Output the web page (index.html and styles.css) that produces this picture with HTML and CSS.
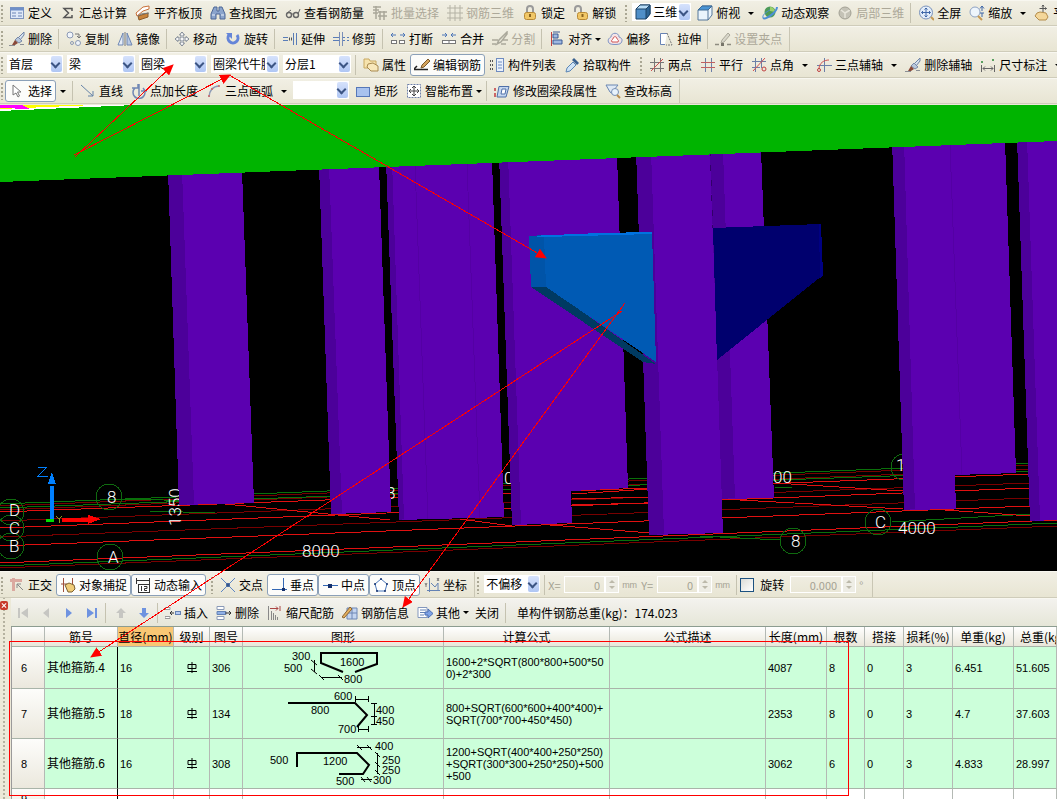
FILE: index.html
```html
<!DOCTYPE html>
<html lang="zh-CN">
<head>
    <meta charset="UTF-8">
    <meta name="viewport" content="width=device-width, initial-scale=1.0">
    <title>钢筋算量</title>
    <link rel="stylesheet" href="styles.css">
</head>
<body>
    <!-- icons used more than once -->
    <svg class="sprite" aria-hidden="true">
        <symbol id="brush" viewBox="0 0 16 16">
            <path d="M15 1L9 7l2 2 4-5z" fill="#d8e2ee" stroke="#6f84a8"/>
            <path d="M9 6l4 4-3 2-4-3z" fill="#b9c8dc" stroke="#7a8aa8"/>
            <path d="M6 9l3 3-3 2-3 0z" fill="#8a4a3a"/>
            <path d="M0 14.500h6M11 13.500h4" stroke="#8b8f95"/>
        </symbol>
        <symbol id="cube" viewBox="0 0 16 16">
            <path d="M1 5l4-4h10v9l-4 5H1z" fill="#4f8fc8" stroke="#1d4468"/>
            <path d="M1 5l4-4h10l-4 4z" fill="#b7dcf6" stroke="#1d4468"/>
            <path d="M11 5l4-4v9l-4 5z" fill="#2d6494" stroke="#1d4468"/>
        </symbol>
        <symbol id="rebar3d" viewBox="0 0 16 16">
            <path d="M3 0v16M8 0v16M13 0v16M0 3h16M0 8h16M0 13h16" stroke="#b4b2a5" fill="none"/>
        </symbol>
        <symbol id="grade" viewBox="0 0 10 11">
            <path d="M1 2.500h8v4H1zM5 0v11M0 9.500h10" fill="none" stroke="#000"/>
        </symbol>
    </svg>

    <header>
        <div class="row">
            <div class="toolbar">
                <span class="grip"></span>
                <button class="btn"><svg class="icon" viewBox="0 0 16 16"><rect x="1.500" y="2.500" width="13" height="11" fill="#dfe9f8" stroke="#7f95bd"/><path d="M1 4h14" stroke="#6f8fc8" stroke-width="3"/><path d="M3 8h4M3 11h4M9 8h4M9 11h4" stroke="#6d85b5"/></svg>定义</button>
                <button class="btn"><svg class="icon" viewBox="0 0 16 16"><path d="M12 6V3.500H4L8.500 8 4 12.500h8V10" fill="none" stroke="#555" stroke-width="1.500"/></svg>汇总计算</button>
                <button class="btn"><svg class="icon" viewBox="0 0 16 16"><path d="M1 8l7-6 6-1v3L8 6l-6 5z" fill="#fff" stroke="#c9703a"/><path d="M3 11l10-3v4l-9 3z" fill="#c8843c" stroke="#8a5a2a"/><path d="M3 11l3-2 8-1" stroke="#777" fill="none"/></svg>平齐板顶</button>
                <button class="btn"><svg class="icon" viewBox="0 0 16 16"><path d="M4 2h3v4h2V2h3l3 7v5h-5V9H6v5H1V9z" fill="#8ba4cc" stroke="#4d6796"/><path d="M2 10h3M11 10h3" stroke="#e6eefb"/></svg>查找图元</button>
                <button class="btn"><svg class="icon" viewBox="0 0 16 16"><circle cx="4" cy="10" r="2.500" fill="none" stroke="#666" stroke-width="1.400"/><circle cx="11" cy="10" r="2.500" fill="none" stroke="#666" stroke-width="1.400"/><path d="M6 9h3M2 8l4-3M13 9l2-5" stroke="#666" fill="none"/></svg>查看钢筋量</button>
                <button class="btn" disabled><svg class="icon" viewBox="0 0 16 16"><path d="M1 2h8M1 5h6M1 8h5M4 1v13M8 6v9M12 6v9M6 7h9M6 11h9" stroke="#a9a799" stroke-width="1.500" fill="none"/></svg>批量选择</button>
                <button class="btn" disabled><svg class="icon"><use href="#rebar3d"/></svg>钢筋三维</button>
                <button class="btn"><svg class="icon" viewBox="0 0 16 16"><path d="M5 8V4a3 3 0 0 1 6 0v4" fill="none" stroke="#9a9a9a" stroke-width="2"/><rect x="2.500" y="7.500" width="11" height="7" rx="2" fill="#f1c766" stroke="#b98a35"/><path d="M8 9v3" stroke="#8a6420" stroke-width="2"/></svg>锁定</button>
                <button class="btn"><svg class="icon" viewBox="0 0 16 16"><path d="M2 7V4a3 3 0 0 1 6 0v4" fill="none" stroke="#9a9a9a" stroke-width="2"/><rect x="4.500" y="7.500" width="10" height="7" rx="2" fill="#f1c766" stroke="#b98a35"/><path d="M9.500 9v3" stroke="#8a6420" stroke-width="2"/></svg>解锁</button>
            </div>
            <div class="toolbar">
                <span class="grip"></span>
                <label class="combo view"><svg class="icon"><use href="#cube"/></svg><select aria-label="视图"><option>三维</option></select></label>
                <button class="btn"><svg class="icon" viewBox="0 0 16 16"><path d="M1 5l4-4h10v9l-4 5H1z" fill="#eaf4fc" stroke="#54779a"/><path d="M1 5l4-4h10l-4 4z" fill="#4a94d4" stroke="#3d6a94"/><path d="M11 5v10" stroke="#54779a"/></svg>俯视</button><button class="drop" aria-label="俯视选项"></button>
                <button class="btn"><svg class="icon" viewBox="0 0 16 16"><circle cx="8" cy="7" r="5.500" fill="#4d9b58"/><path d="M8 2a5 5 0 0 1 5 5l-5-1z" fill="#9bd06b"/><path d="M1 13C4 15 15 7 15 2" fill="none" stroke="#4d8fd6" stroke-width="2"/><path d="M1 13c-1-3 3-6 7-8" fill="none" stroke="#4d8fd6"/></svg>动态观察</button>
                <button class="btn" disabled><svg class="icon" viewBox="0 0 16 16"><circle cx="8" cy="8" r="6" fill="#c4c2b6"/><path d="M4 5l4 3 5-3M8 8v5" stroke="#e8e6dc" fill="none" stroke-width="1.500"/><circle cx="8" cy="8" r="6" fill="none" stroke="#a3a195"/></svg>局部三维</button>
                <span class="sep"></span>
                <button class="btn"><svg class="icon" viewBox="0 0 16 16"><circle cx="8" cy="7.500" r="6.500" fill="#e3edf9" stroke="#7b93bc"/><path d="M8 3v9M3.500 7.500h9M6.500 4.500L8 3l1.500 1.500M6.500 10.500L8 12l1.500-1.500M5 6L3.500 7.500 5 9M11 6l1.500 1.500L11 9" fill="none" stroke="#3f67a8"/><path d="M13 12l3 3" stroke="#c79a55" stroke-width="2"/></svg>全屏</button>
                <button class="btn"><svg class="icon" viewBox="0 0 16 16"><circle cx="6" cy="7" r="5" fill="#eef5fc" stroke="#8fa3c4"/><path d="M9 11l4 4" stroke="#c79a55" stroke-width="2"/><path d="M13 1v5M11 3.500l2-2.500 2 2.500M11 8h4M13 12V8" stroke="#3f67a8" fill="none"/></svg>缩放</button><button class="drop" aria-label="缩放选项"></button>
                <button class="btn"><svg class="icon" viewBox="0 0 16 16"><path d="M3 8l3-1 6 1 2 4-2 3H5l-4-4z" fill="#f4d79a" stroke="#b58d4b"/><path d="M9 0v7M5.500 3.500h7M8 1.500L9 0l1 1.500M11 2.500l1.500 1L11 4.500" stroke="#555" fill="none"/></svg>平移</button>
            </div>
        </div>

        <div class="row">
            <div class="toolbar ends">
                <span class="grip"></span>
                <button class="btn"><svg class="icon"><use href="#brush"/></svg>删除</button>
                <span class="sep"></span>
                <button class="btn"><svg class="icon" viewBox="0 0 16 16"><circle cx="4" cy="4" r="3" fill="#f0f4fa" stroke="#8c9ab5"/><circle cx="12" cy="12" r="2.500" fill="#f0f4fa" stroke="#8c9ab5"/><circle cx="6" cy="12" r="1.500" fill="none" stroke="#8c9ab5"/><path d="M9 3h4v4M11 5l2 2 2-2" fill="none" stroke="#777"/></svg>复制</button>
                <button class="btn"><svg class="icon" viewBox="0 0 16 16"><path d="M6 2v12H1z" fill="#e6edf7" stroke="#6e87b3"/><path d="M10 2v12h5z" fill="#b8c9e4" stroke="#6e87b3"/><path d="M8 1v14" stroke="#777"/></svg>镜像</button>
                <span class="sep"></span>
                <button class="btn"><svg class="icon" viewBox="0 0 16 16"><path d="M8 1l2.500 3H9v3h3V5.500L15 8l-3 2.500V9H9v3h1.500L8 15l-2.500-3H7V9H4v1.500L1 8l3-2.500V7h3V4H5.500z" fill="#f7f7f7" stroke="#7e8794"/></svg>移动</button>
                <button class="btn"><svg class="icon" viewBox="0 0 16 16"><path d="M4 4a5 5 0 1 0 8 0" fill="none" stroke="#6585d8" stroke-width="3"/><path d="M1 2h6v6z" fill="#6585d8"/></svg>旋转</button>
                <span class="sep"></span>
                <button class="btn"><svg class="icon" viewBox="0 0 16 16"><path d="M1 6.500h5M1 9.500h5" stroke="#5a7db8"/><path d="M7 8h4" stroke="#555" stroke-dasharray="1 1" stroke-width="3"/><path d="M11.500 2v12M14.500 2v12" stroke="#5a7db8"/></svg>延伸</button>
                <button class="btn"><svg class="icon" viewBox="0 0 16 16"><path d="M0 6.500h6M0 9.500h6M10 6.500h2M10 9.500h2M14 6.500h2M14 9.500h2" stroke="#5a7db8"/><path d="M6.500 1v14M9.500 1v14" stroke="#7a8fb8"/></svg>修剪</button>
                <span class="sep"></span>
                <button class="btn"><svg class="icon" viewBox="0 0 16 16"><path d="M1 4h5M3 2L1 4l2 2M10 4h5M13 2l2 2-2 2" stroke="#4d76b8" fill="none"/><rect x="1.500" y="9.500" width="5" height="3" fill="#fff" stroke="#777"/><rect x="9.500" y="9.500" width="5" height="3" fill="#fff" stroke="#777"/></svg>打断</button>
                <button class="btn"><svg class="icon" viewBox="0 0 16 16"><path d="M1 4h5M4 2l2 2-2 2M10 4h5M12 2l-2 2 2 2" stroke="#4d76b8" fill="none"/><rect x="1.500" y="9.500" width="13" height="3" fill="#fff" stroke="#777"/><path d="M8 9v4" stroke="#777"/></svg>合并</button>
                <button class="btn" disabled><svg class="icon" viewBox="0 0 16 16"><path d="M15 1L7 9l-2 4 4-2 6-8zM0 9h6M0 13h4M10 9h6M9 13h5" fill="none" stroke="#aaa89b" stroke-width="1.500"/></svg>分割</button>
                <span class="sep"></span>
                <button class="btn menu"><svg class="icon" viewBox="0 0 16 16"><path d="M2.500 1v14" stroke="#c04040"/><path d="M4 3h5v4H4zM4 9h9v4H4z" fill="#9fb8e0" stroke="#3a5b96"/><path d="M4 1h7" stroke="#3a5b96"/></svg>对齐<span class="caret"></span></button>
                <button class="btn"><svg class="icon" viewBox="0 0 16 16"><path d="M2 12c-2-3 0-5 2-6 0-5 8-5 8 0 3 1 4 3 2 6-1 2-11 2-12 0z" fill="#f3e3e6" stroke="#7b93c4"/><path d="M5 11c-1-2 0-2 1-3 0-3 4-3 4 0 1 1 2 1 1 3z" fill="#fff" stroke="#d05555"/></svg>偏移</button>
                <button class="btn"><svg class="icon" viewBox="0 0 16 16"><path d="M9 2.500H2.500v11H7" fill="#fff" stroke="#6883b4"/><path d="M9 2l5 12H8" fill="none" stroke="#777" stroke-dasharray="2 1"/></svg>拉伸</button>
                <span class="sep"></span>
                <button class="btn" disabled><svg class="icon" viewBox="0 0 16 16"><path d="M0 13.500h4M12 13.500h4" stroke="#8e8c80" stroke-width="1.500"/><path d="M13 2l2 2-6 7-3 1 1-3z" fill="#d8d6ca" stroke="#a9a799"/><rect x="6" y="12" width="3" height="3" fill="#77756a"/></svg>设置夹点</button>
            </div>
        </div>

        <div class="row">
            <div class="toolbar">
                <span class="grip"></span>
                <label class="combo floor"><select aria-label="楼层"><option>首层</option></select></label>
                <label class="combo"><select aria-label="构件大类"><option>梁</option></select></label>
                <label class="combo"><select aria-label="构件类型"><option>圈梁</option></select></label>
                <label class="combo"><select aria-label="构件"><option>圈梁代牛腿</option></select></label>
                <label class="combo"><select aria-label="分层"><option>分层1</option></select></label>
                <span class="sep"></span>
                <button class="btn"><svg class="icon" viewBox="0 0 16 16"><path d="M1 2h5l1 2h6v7H1z" fill="#f6e3ae" stroke="#c8a860"/><path d="M5 7l5-1 5 3v5H8l-4-4z" fill="#f8e8bb" stroke="#a88a50"/></svg>属性</button>
                <button class="btn active"><svg class="icon" viewBox="0 0 16 16"><path d="M0 12.500h14M0 12l3-3" stroke="#222" stroke-width="1.500" fill="none"/><path d="M14 2l2 2-6 6-3 1 1-3z" fill="#d4a35c" stroke="#7b5a2c"/></svg>编辑钢筋</button>
                <button class="btn"><svg class="icon" viewBox="0 0 16 16"><path d="M1 4h4M1 8h4M1 12h4" stroke="#555" stroke-width="2" stroke-dasharray="1 1"/><rect x="7.500" y="1.500" width="7" height="13" fill="#eaf1fb" stroke="#6f8cc0"/><path d="M9 5h4M9 8h4M9 11h4" stroke="#6f8cc0"/></svg>构件列表</button>
                <button class="btn"><svg class="icon" viewBox="0 0 16 16"><path d="M10 1l5 5-2 2-5-5z" fill="#39608f"/><path d="M9 5l3 3-6 6-4 1 1-4z" fill="#cfe3f5" stroke="#5b86b5"/></svg>拾取构件</button>
            </div>
            <div class="toolbar">
                <span class="grip"></span>
                <button class="btn"><svg class="icon" viewBox="0 0 16 16"><path d="M5.500 1v14M11.500 1v14" stroke="#777"/><path d="M1 5.500h14M1 11.500h14" stroke="#777"/><path d="M2 14L14 2" stroke="#d05050"/></svg>两点</button>
                <button class="btn"><svg class="icon" viewBox="0 0 16 16"><path d="M5.500 1v14M11.500 1v14" stroke="#6c7fa8"/><path d="M1 5.500h14M1 10.500h14" stroke="#c06060"/></svg>平行</button>
                <button class="btn"><svg class="icon" viewBox="0 0 16 16"><path d="M4.500 1v14M10.500 1v10M1 4.500h14M1 10.500h8" stroke="#6c7fa8"/><path d="M2 14L14 1" stroke="#d05050"/><circle cx="13" cy="12" r="2" fill="none" stroke="#c04040"/></svg>点角</button><button class="drop" aria-label="点角选项"></button>
                <button class="btn"><svg class="icon" viewBox="0 0 16 16"><path d="M8.500 1v14M1 8.500h15" stroke="#6c7fa8"/><path d="M3 12C3 6 8 3 13 3" fill="none" stroke="#d05050"/><circle cx="3" cy="13" r="1.500" fill="none" stroke="#c04040"/></svg>三点辅轴</button><button class="drop" aria-label="三点辅轴选项"></button>
                <button class="btn"><svg class="icon"><use href="#brush"/></svg>删除辅轴</button>
                <button class="btn"><svg class="icon" viewBox="0 0 16 16"><path d="M1.500 8v7M14.500 8v7M3 11.500h10M5 9.500l-2 2 2 2M11 9.500l2 2-2 2" fill="none" stroke="#666"/><path d="M1 5h2M12 3h2" stroke="#5aa060" stroke-width="2"/></svg>尺寸标注</button><button class="drop" aria-label="尺寸标注选项"></button>
            </div>
        </div>

        <div class="row">
            <div class="toolbar ends">
                <span class="grip"></span>
                <button class="btn active"><svg class="icon" viewBox="0 0 16 16"><path d="M4 2v10l3-2 2 4 1.500-1-2-4H12z" fill="#fff" stroke="#777"/></svg>选择</button><button class="drop" aria-label="选择选项"></button>
                <span class="sep"></span>
                <button class="btn"><svg class="icon" viewBox="0 0 16 16"><path d="M1 2l12 11M13 8v5H8" fill="none" stroke="#6583a8"/></svg>直线</button>
                <button class="btn"><svg class="icon" viewBox="0 0 16 16"><path d="M4 5a6 6 0 1 0 8 0M8 1v12M1 5h6V1M10 8h6" fill="none" stroke="#7087b4" stroke-width="1.500"/></svg>点加长度</button>
                <button class="btn"><svg class="icon" viewBox="0 0 16 16"><path d="M3 14C3 8 7 3 13 3" fill="none" stroke="#8d9bb5" stroke-width="1.500"/><circle cx="3" cy="13" r="1" fill="#c66"/><circle cx="6" cy="6" r="1" fill="#c66"/><circle cx="13" cy="3" r="1" fill="#c66"/></svg>三点画弧</button><button class="drop" aria-label="三点画弧选项"></button>
                <label class="combo floor"><select aria-label="半径"><option></option></select></label>
                <button class="btn"><svg class="icon" viewBox="0 0 16 16"><rect x="1.500" y="4.500" width="13" height="9" fill="#a8c2ee" stroke="#5577b8"/></svg>矩形</button>
                <button class="btn menu"><svg class="icon" viewBox="0 0 16 16"><rect x="1.500" y="1.500" width="13" height="13" fill="#fff" stroke="#6c7fa8" stroke-dasharray="2 1"/><path d="M8 3v10M3 8h10M6 5l2-2 2 2M6 11l2 2 2-2M5 6L3 8l2 2M11 6l2 2-2 2" fill="none" stroke="#444"/></svg>智能布置<span class="caret"></span></button>
                <span class="sep"></span>
                <button class="btn"><svg class="icon" viewBox="0 0 16 16"><path d="M5 3.500h10L12 14H3z" fill="#c5d7f0" stroke="#4f70a8"/><path d="M8 6h4l-1 5H7z" fill="#fff" stroke="#4f70a8"/><path d="M1 5v3M1 10v4" stroke="#c66" stroke-width="2"/></svg>修改圈梁段属性</button>
                <button class="btn"><svg class="icon" viewBox="0 0 16 16"><path d="M1 2h12L9 7v5L5 9z" fill="#dfe9f5" stroke="#6b87b2"/><circle cx="10" cy="9" r="3.500" fill="#e8f3fc" stroke="#7890b4"/><path d="M12 12l3 3" stroke="#b98d50" stroke-width="2"/></svg>查改标高</button>
            </div>
        </div>
    </header>

    <main>
        <svg class="scene" viewBox="0 105 1057 466" role="img" aria-label="三维视图">
            <rect y="105" width="1057" height="466" fill="#000"/>

            <!-- axis grid on the ground -->
            <g class="grid-dark">
                <path d="M0 506L1057 464M0 510L1057 468M0 521L1057 482M0 537L1057 497M0 568L1057 526"/>
            </g>
            <g class="grid-green">
                <path d="M0 504L1057 462M0 508L1057 470M0 566L1057 523M125 499L240 502M150 511L215 513M775 487H792M892 522L1030 514M700 536L780 540"/>
            </g>
            <g class="grid-red">
                <path d="M0 512L1057 473M0 528L1057 487M0 546L1057 505M0 563L1057 520M225 504L390 520M460 519L512 526M550 525L650 533M722 499L903 509M775 483L903 491M945 510L1030 516M572 494L650 489M572 499L650 497M572 505L650 503"/>
            </g>
            <g class="bubbles">
                <circle cx="11" cy="512" r="13"/>
                <circle cx="11" cy="528" r="13"/>
                <circle cx="11" cy="546" r="13"/>
                <circle cx="109" cy="497" r="13"/>
                <circle cx="110" cy="557" r="13"/>
                <circle cx="793" cy="541" r="13"/>
                <circle cx="878" cy="522" r="13"/>
                <circle cx="904" cy="467" r="13"/>
            </g>
            <g class="marks">
                <text x="9" y="516">D</text>
                <text x="9" y="534">C</text>
                <text x="9" y="552">B</text>
                <text x="107" y="503">8</text>
                <text x="108" y="563">A</text>
                <text x="302" y="557">8000</text>
                <text transform="translate(181 526) rotate(-90)">1350</text>
                <text x="386" y="499">8</text>
                <text x="504" y="484">0</text>
                <text x="773" y="483">00</text>
                <text x="791" y="547">8</text>
                <text x="875" y="528">C</text>
                <text x="898" y="534">4000</text>
                <text x="896" y="471">1</text>
            </g>

            <!-- columns: front faces, then the shaded sides -->
            <g fill="#5b00b0">
                <path d="M168 170H242L254 503L179 505z"/>
                <path d="M319 165H379L391 512L331 514z"/>
                <path d="M386 160H492L504 517L399 520z"/>
                <path d="M499 155H617L628 488L571 491L572 523L512 525z"/>
                <path d="M708 150H761L774 498L721 499z"/>
                <path d="M892 140H1005L1016 473L955 475L956 509L904 510z"/>
                <path d="M1017 138H1057V520L1030 521z"/>
            </g>
            <g fill="#4c009a">
                <path d="M168 170H182L194 504L179 505z"/>
                <path d="M319 165H329L342 513L331 514z"/>
                <path d="M386 160H392L404 519L399 520z"/>
                <path d="M499 155H508L521 524L512 525z"/>
                <path d="M708 150H723L735 498L721 499z"/>
                <path d="M892 140H904L915 509L904 510z"/>
                <path d="M1017 138H1027L1040 520L1030 521z"/>
            </g>
            <path d="M636 150H710L723 533L649 535z" fill="#5b00b0"/>
            <path d="M636 150H651L664 534L649 535z" fill="#4c009a"/>
            <path d="M710 150L713 228" stroke="#32006a" stroke-dasharray="6 9"/>
            <path d="M415 164L428 519M467 164L480 518M950 144L962 474" stroke="#5400a4" fill="none"/>

            <!-- ring beam -->
            <path d="M0 105H1057V141L0 182z" fill="#00b400"/>
            <path d="M0 105H135L0 111z" fill="#fff"/>
            <path d="M0 105H95L0 109z" fill="#ff0"/>
            <path d="M0 105H22L30 109L0 108z" fill="#f0f"/>

            <!-- corbels -->
            <path d="M713 228L821 224L823 275L717 360z" fill="#00006e"/>
            <path d="M821 224L823 275L820 279L819 224z" fill="#000082"/>
            <path d="M531 287L546 286L656 364L643 362z" fill="#003a62"/>
            <path d="M529 236L544 235L546 287L531 287z" fill="#0054a8"/>
            <path d="M544 236L652 232L656 362L546 287z" fill="#005ab4"/>
            <path d="M529 236L600 233L652 232V234L544 237z" fill="#0072e0"/>

            <!-- coordinate axes -->
            <path d="M52 520V486" stroke="#0080ff" stroke-width="4"/>
            <path d="M52 472L56 484H48z" fill="#0080ff"/>
            <path d="M38 467H47L38 476H48" fill="none" stroke="#0080ff"/>
            <path d="M62 520H90" stroke="#f00" stroke-width="4"/>
            <path d="M88 515L101 519L88 524z" fill="#f00"/>
            <path d="M56 516l3 3 3-3M59 519v4" fill="none" stroke="#8a9a20"/>
            <path d="M46 520H54" stroke="#0d0" stroke-width="3"/>
        </svg>

        <div class="row status">
            <div class="toolbar">
                <span class="grip"></span>
                <button class="btn"><svg class="icon" viewBox="0 0 16 16"><path d="M1 3.500h12M4.500 1v13" stroke="#dba9a0" stroke-width="3"/><path d="M8 7l6 6M8 7v4M8 7h4" stroke="#888" fill="none"/></svg>正交</button>
                <button class="btn active"><svg class="icon" viewBox="0 0 16 16"><path d="M3.500 1v14M1 7h6M12.500 1v6" stroke="#a0503c" fill="none"/><path d="M5 8l4-2 5 2 1 4-3 3H8z" fill="#f0cc78" stroke="#7b6030"/></svg>对象捕捉</button>
                <button class="btn active"><svg class="icon" viewBox="0 0 16 16"><path d="M1.500 1v6M14.500 1v6M1 3.500h14" stroke="#333" fill="none"/><rect x="3.500" y="7.500" width="11" height="8" fill="#fff" stroke="#333"/><path d="M6.500 9v5M9 9.500h3v2H9.500v2H12" stroke="#333" fill="none"/></svg>动态输入</button>
            </div>
            <div class="toolbar">
                <span class="grip"></span>
                <button class="btn"><svg class="icon" viewBox="0 0 16 16"><path d="M1 1l14 14M15 1L1 15" stroke="#5b84c4"/><circle cx="8" cy="8" r="2" fill="#31558f"/></svg>交点</button>
                <button class="btn active"><svg class="icon" viewBox="0 0 16 16"><path d="M1 12.500h15M12.500 1v11" stroke="#3468b4"/><rect x="11" y="11" width="3" height="3" fill="#14306c"/></svg>垂点</button>
                <button class="btn active"><svg class="icon" viewBox="0 0 16 16"><path d="M1 8.500h15" stroke="#3468b4"/><rect x="6" y="7" width="4" height="4" fill="#14306c"/></svg>中点</button>
                <button class="btn active"><svg class="icon" viewBox="0 0 16 16"><path d="M8 2l6 5-2 7H4L2 7z" fill="#fff" stroke="#4b78bc"/><g fill="#14306c"><circle cx="8" cy="2" r="1"/><circle cx="14" cy="7" r="1"/><circle cx="12" cy="14" r="1"/><circle cx="4" cy="14" r="1"/><circle cx="2" cy="7" r="1"/></g></svg>顶点</button>
                <button class="btn"><svg class="icon" viewBox="0 0 16 16"><path d="M5.500 1v14M3 13.500h13M7 6l4 4 3-4v8" stroke="#6482b4" fill="none"/><path d="M13 1l2 3M15 1l-2 3M1 6l1 2 1-2M2 8v2" stroke="#777" fill="none"/></svg>坐标</button>
            </div>
            <div class="toolbar ends">
                <span class="grip"></span>
                <label class="combo floor"><select aria-label="偏移方式"><option>不偏移</option></select></label>
                <span class="sep"></span>
                <label class="field"><span class="axis">X=</span><input type="text" value="0" disabled><span class="spin"></span><span class="unit">mm</span></label>
                <label class="field"><span class="axis">Y=</span><input type="text" value="0" disabled><span class="spin"></span><span class="unit">mm</span></label>
                <span class="sep"></span>
                <label class="check"><input type="checkbox">旋转</label>
                <label class="field angle"><input type="text" value="0.000" aria-label="旋转角度" disabled><span class="spin"></span>°</label>
            </div>
        </div>
    </main>

    <section class="panel">
        <div class="gutter"><button class="close" aria-label="关闭面板"></button></div>
        <div class="content">
            <div class="row tools">
                <button class="nav" aria-label="首条" disabled><svg class="icon" viewBox="0 0 16 16"><path d="M3 3h2v10H3zM13 3v10L6 8z"/></svg></button>
                <button class="nav" aria-label="上一条" disabled><svg class="icon" viewBox="0 0 16 16"><path d="M11 3v10L5 8z"/></svg></button>
                <button class="nav" aria-label="下一条"><svg class="icon" viewBox="0 0 16 16"><path d="M5 3v10l6-5z"/></svg></button>
                <button class="nav" aria-label="末条"><svg class="icon" viewBox="0 0 16 16"><path d="M3 3v10l7-5zM11 3h2v10h-2z"/></svg></button>
                <span class="sep"></span>
                <button class="nav" aria-label="上移" disabled><svg class="icon" viewBox="0 0 16 16"><path d="M8 3l5 5h-3v5H6V8H3z"/></svg></button>
                <button class="nav" aria-label="下移"><svg class="icon" viewBox="0 0 16 16"><path d="M8 13L3 8h3V3h4v5h3z"/></svg></button>
                <span class="sep"></span>
                <button class="btn"><svg class="icon" viewBox="0 0 16 16"><path d="M0 2.500h5v2H0zM0 11.500h5v2H0z" fill="#fff" stroke="#999"/><path d="M5 8h4M7 6L5 8l2 2" stroke="#333" fill="none"/><rect x="10.500" y="6.500" width="5" height="3" fill="#b6caf0" stroke="#6482b4"/></svg>插入</button>
                <button class="btn"><svg class="icon" viewBox="0 0 16 16"><path d="M1 1.500h7v3H1zM1 11.500h7v3H1z" fill="#fff" stroke="#8a9ab8"/><path d="M1 6.500h9v3H1z" fill="#8fb0e8" stroke="#6482b4"/><path d="M9 8h6M13 6l2 2-2 2" stroke="#333" fill="none"/></svg>删除</button>
                <button class="btn"><svg class="icon" viewBox="0 0 16 16"><path d="M1.500 1v14M4.500 6v9M6.500 8v7M8.500 10v5M10.500 12v3" stroke="#888"/><path d="M3 3.500h8M9 1.500l2 2-2 2M13 1v5" stroke="#a44" fill="none"/></svg>缩尺配筋</button>
                <button class="btn"><svg class="icon" viewBox="0 0 16 16"><path d="M5 3h10v11H5z" fill="#c4d5ef" stroke="#6d86b4"/><path d="M10 3v11M5 8h10" stroke="#6d86b4"/><path d="M0 12L8 2l2 2-8 9z" fill="#e6b260" stroke="#8a6330"/></svg>钢筋信息</button>
                <button class="btn menu"><svg class="icon" viewBox="0 0 16 16"><path d="M1 2.500h9v10H1z" fill="#fff" stroke="#8397bd"/><path d="M3 5h6M3 7.500h6M3 10h4" stroke="#6482b4"/><path d="M8 7h3V4l5 4.500-5 4.500v-3H8z" fill="#7fa3e6" stroke="#4a6eb4"/></svg>其他<span class="caret"></span></button>
                <button class="btn">关闭</button>
                <span class="sep"></span>
                <span class="total">单构件钢筋总重(kg)：174.023</span>
            </div>

            <table>
                <colgroup>
                    <col class="w-index"><col class="w-name"><col class="w-dia"><col class="w-grade"><col class="w-fig"><col class="w-shape"><col class="w-formula"><col><col class="w-length"><col class="w-count"><col class="w-lap"><col class="w-loss"><col class="w-unit"><col class="w-sum">
                </colgroup>
                <thead>
                    <tr><th></th><th>筋号</th><th class="current">直径(mm)</th><th>级别</th><th>图号</th><th>图形</th><th>计算公式</th><th>公式描述</th><th>长度(mm)</th><th>根数</th><th>搭接</th><th>损耗(%)</th><th>单重(kg)</th><th class="cut">总重(kg)</th></tr>
                </thead>
                <tbody>
                    <tr>
                        <th>6</th><td class="name">其他箍筋.4</td><td>16</td>
                        <td class="grade"><svg role="img" aria-label="三级钢"><use href="#grade"/></svg></td><td>306</td>
                        <td class="shape">
                            <svg width="200" height="41" viewBox="243 647 200 41">
                                <path class="bar" d="M343 672L321 663V653H377V664L355 672"/>
                                <path class="dim" d="M314.500 660V672M311 660l6 5M311 669l6 5M321 677.500H342M319 675l5 5M338 675l5 5"/>
                                <text x="292" y="660">300</text><text x="284" y="672">500</text><text x="340" y="666">1600</text><text x="344" y="683">800</text>
                            </svg>
                        </td>
                        <td>1600+2*SQRT(800*800+500*50<br>0)+2*300</td><td></td><td>4087</td><td>8</td><td>0</td><td>3</td><td>6.451</td><td>51.605</td>
                    </tr>
                    <tr>
                        <th>7</th><td class="name">其他箍筋.5</td><td>18</td>
                        <td class="grade"><svg role="img" aria-label="三级钢"><use href="#grade"/></svg></td><td>134</td>
                        <td class="shape">
                            <svg width="200" height="49" viewBox="243 689 200 49">
                                <path class="bar" d="M288 703H355L367 715L357 727"/>
                                <path class="dim" d="M355.500 696v6M368.500 696v6M355 699.500H369M358.500 726v6M368.500 726v6M358 729.500H369M374.500 703V724M371 703.500h6M371 716.500h6M371 724.500h6"/>
                                <text x="334" y="700">600</text><text x="311" y="714">800</text><text x="338" y="733">700</text><text x="376" y="714">400</text><text x="376" y="725">450</text>
                            </svg>
                        </td>
                        <td>800+SQRT(600*600+400*400)+<br>SQRT(700*700+450*450)</td><td></td><td>2353</td><td>8</td><td>0</td><td>3</td><td>4.7</td><td>37.603</td>
                    </tr>
                    <tr>
                        <th>8</th><td class="name">其他箍筋.6</td><td>16</td>
                        <td class="grade"><svg role="img" aria-label="三级钢"><use href="#grade"/></svg></td><td>308</td>
                        <td class="shape">
                            <svg width="200" height="49" viewBox="243 739 200 49">
                                <path class="bar" d="M297 767V753H357L369 765L363 774H339"/>
                                <path class="dim" d="M357 747.500H371M357 745l5 5M367 745l5 5M377.500 753V774M375 752l5 5M375 762l5 5M375 770l5 5M361 779.500H372M361 777l4 5M367 777l4 5"/>
                                <text x="270" y="764">500</text><text x="323" y="765">1200</text><text x="336" y="785">500</text><text x="375" y="750">400</text><text x="382" y="764">250</text><text x="382" y="774">250</text><text x="373" y="784">300</text>
                            </svg>
                        </td>
                        <td>1200+SQRT(400*400+250*250)<br>+SQRT(300*300+250*250)+500<br>+500</td><td></td><td>3062</td><td>6</td><td>0</td><td>3</td><td>4.833</td><td>28.997</td>
                    </tr>
                    <tr class="blank">
                        <th>9</th><td></td><td></td><td></td><td></td><td></td><td></td><td></td><td></td><td></td><td></td><td></td><td></td><td></td>
                    </tr>
                </tbody>
            </table>
        </div>
    </section>

    <!-- red notes drawn over the window -->
    <svg class="notes" viewBox="0 0 1057 799" aria-hidden="true">
        <defs>
            <marker id="arrow" viewBox="0 0 11 10" refX="10" refY="5" markerWidth="11" markerHeight="10" markerUnits="userSpaceOnUse" orient="auto"><path d="M0 0L11 5L0 10z" fill="#f00"/></marker>
        </defs>
        <path d="M75 157L173 65"/>
        <path d="M74 155L230 75"/>
        <path d="M229 75L546 258"/>
        <path d="M622 311L91 657"/>
        <path d="M625 303L403 607"/>
        <rect x="9.500" y="641.500" width="839" height="154"/>
    </svg>
</body>
</html>
```
FILE: styles.css
```css
* {
    box-sizing: border-box;
}

body {
    position: relative;
    height: 100vh;
    margin: 0;
    overflow: hidden;
    background-color: #ece9d8;
    color: #000;
    font-family: "Noto Sans CJK SC", sans-serif;
    font-size: 12px;
    line-height: 16px;
}

button,
select,
input {
    margin: 0;
    padding: 0;
    border: none;
    background: none;
    color: inherit;
    font: inherit;
}

.sprite {
    display: none;
}

/* toolbars */
header {
    padding-bottom: 1px;
}

.row {
    display: flex;
    height: 26px;
    overflow: hidden;
    white-space: nowrap;
    border-top: 1px solid #f8f7f0;
    border-bottom: 1px solid #cfccba;
    background: linear-gradient(#f1efe4, #e8e5d3);
}

.toolbar {
    display: flex;
    flex-shrink: 0;
    align-items: center;
    padding-right: 3px;
}

.toolbar + .toolbar,
.toolbar.ends {
    border-right: 1px solid #c9c6b4;
}

.grip {
    flex-shrink: 0;
    width: 5px;
    height: 18px;
    background: radial-gradient(circle at 2px 2px, #aaa794 1px, transparent 1px) 0 0 / 5px 4px;
}

.toolbar + .toolbar .grip {
    margin: 0 1px;
}

.btn {
    display: flex;
    flex-shrink: 0;
    align-items: center;
    gap: 3px;
    height: 22px;
    padding: 0 4px;
    white-space: nowrap;
}

.btn.active {
    padding: 0 3px;
    border: 1px solid #8ba0b8;
    border-radius: 3px;
    background-color: #fcfcfa;
}

.btn.menu {
    padding-right: 2px;
}

.btn:disabled {
    color: #aca899;
}

.icon {
    flex-shrink: 0;
    width: 16px;
    height: 16px;
}

.caret,
.drop::after {
    display: block;
    border: 3px solid transparent;
    border-top-color: #000;
    border-bottom: none;
    content: "";
}

.drop {
    display: flex;
    flex-shrink: 0;
    align-items: center;
    justify-content: center;
    width: 14px;
    height: 22px;
}

.sep {
    flex-shrink: 0;
    align-self: center;
    width: 1px;
    height: 20px;
    margin: 0 3px 0 2px;
    background-color: #c5c2b0;
}

.combo {
    position: relative;
    display: flex;
    flex-shrink: 0;
    align-items: center;
    width: 68px;
    height: 18px;
    margin: 0 2px 2px;
    background-color: #fff;
}

.combo.floor {
    width: 56px;
}

.combo.view {
    width: 59px;
    padding-left: 3px;
}

.combo select {
    flex: 1;
    min-width: 0;
    height: 18px;
    padding: 0 14px 0 2px;
    appearance: none;
    overflow: hidden;
}

.combo::before {
    position: absolute;
    top: 1px;
    right: 1px;
    width: 11px;
    height: 16px;
    border-radius: 2px;
    background: linear-gradient(#d6e2fc, #afc6f4);
    content: "";
}

.combo::after {
    position: absolute;
    top: 5px;
    right: 4px;
    width: 5px;
    height: 5px;
    border: solid #3c5584;
    border-width: 0 2px 2px 0;
    transform: rotate(45deg);
    content: "";
}

/* 3D view */
main,
.scene {
    display: block;
}

.scene {
    width: 100%;
    height: auto;
    shape-rendering: crispEdges;
}

.grid-dark {
    stroke: #780000;
}

.grid-green {
    stroke: #0a700a;
}

.grid-red {
    stroke: #e01010;
}

.bubbles {
    fill: none;
    stroke: #0f6a0f;
}

.marks {
    fill: #fff;
    font-family: Roboto, "Liberation Sans", sans-serif;
    font-size: 17px;
    font-weight: 300;
}

/* snap bar */
.status {
    height: 27px;
}

.field {
    display: flex;
    align-items: center;
    margin-right: 5px;
    color: #a5a293;
    font-size: 11px;
}

.field .axis {
    width: 16px;
}

.field .unit {
    width: 14px;
    font-family: "Liberation Sans", sans-serif;
    font-size: 9px;
}

.field input {
    width: 41px;
    height: 17px;
    padding-right: 4px;
    border: 1px solid #fff;
    text-align: right;
}

.field.angle {
    margin: 0 6px;
}

.field.angle input {
    width: 52px;
}

.spin {
    position: relative;
    width: 14px;
    height: 17px;
    margin-right: 3px;
    border: 1px solid #fff;
    background-color: #eeede5;
}

.spin::before,
.spin::after {
    position: absolute;
    left: 3px;
    border: 3px solid transparent;
    content: "";
}

.spin::before {
    top: 3px;
    border-top: none;
    border-bottom-color: #bcb9aa;
}

.spin::after {
    bottom: 3px;
    border-bottom: none;
    border-top-color: #bcb9aa;
}

.check {
    display: flex;
    align-items: center;
    gap: 6px;
}

.check input {
    width: 14px;
    height: 14px;
    border: 1px solid #1c5180;
    background: linear-gradient(135deg, #dcdcd7, #fff);
    appearance: none;
}

/* rebar panel */
.panel {
    display: flex;
}

.gutter {
    flex-shrink: 0;
    width: 11px;
    padding-top: 3px;
    background: radial-gradient(circle at 2px 2px, #b5b2a0 1px, transparent 1px) 2px 18px / 4px 4px repeat-y;
}

.close {
    display: block;
    position: relative;
    width: 8px;
    height: 9px;
    border-radius: 2px;
    background-color: #c8392b;
}

.close::before,
.close::after {
    position: absolute;
    top: 4px;
    left: 1px;
    width: 6px;
    height: 1px;
    background-color: #fff;
    transform: rotate(45deg);
    content: "";
}

.close::after {
    transform: rotate(-45deg);
}

.content {
    flex: 1;
    min-width: 0;
}

.tools {
    align-items: center;
    height: 29px;
    border-bottom-color: #8c9c90;
    background: linear-gradient(#f3f2ee, #e6e6d8);
}

.nav {
    display: flex;
    flex-shrink: 0;
    align-items: center;
    justify-content: center;
    width: 23px;
    height: 22px;
    fill: #6f93e0;
}

.nav:disabled {
    fill: #c6c6c2;
}

.total {
    padding-left: 8px;
}

table {
    width: 100%;
    border-left: 1px solid #9a9a9a;
    border-spacing: 0;
    table-layout: fixed;
    background-color: #fff;
}

.w-index, .w-fig { width: 33px; }
.w-name { width: 73px; }
.w-dia { width: 56px; }
.w-grade { width: 36px; }
.w-shape { width: 201px; }
.w-formula { width: 166px; }
.w-length, .w-unit { width: 61px; }
.w-count { width: 38px; }
.w-lap { width: 39px; }
.w-loss { width: 49px; }
.w-sum { width: 43px; }

th,
td {
    padding: 0;
    overflow: hidden;
    border-right: 1px solid #b4b9b4;
    border-bottom: 1px solid #a9b4a9;
    font-weight: normal;
    white-space: nowrap;
}

thead th {
    height: 20px;
    background: linear-gradient(#fff, #e9e6d9);
}

thead .current {
    background: #f9c774;
}

thead .cut {
    padding-left: 6px;
    text-align: left;
}

tbody th {
    padding-right: 8px;
    background: linear-gradient(#fdfdfb, #ebe8dd);
    font-family: "Liberation Sans", sans-serif;
    font-size: 11px;
}

td {
    padding-left: 2px;
    background-color: #ccffda;
    font-family: "Liberation Sans", sans-serif;
    font-size: 11px;
    line-height: 12px;
}

td.name {
    border-right: 1px solid #000;
    font-family: "Liberation Sans", "Noto Sans CJK SC", sans-serif;
    font-size: 12px;
}

td.grade,
td.shape {
    padding: 0;
}

.grade svg {
    display: block;
    width: 10px;
    height: 11px;
    margin: 0 auto;
}

.shape svg {
    display: block;
}

.shape text {
    font-size: 11px;
}

.bar {
    fill: none;
    stroke: #000;
    stroke-width: 2;
}

.dim {
    fill: none;
    stroke: #000;
}

.blank th {
    height: 21px;
}

.blank td {
    background-color: #fff;
}

.blank td:nth-child(2) {
    border-right-color: #000;
}

/* notes */
.notes {
    position: absolute;
    top: 0;
    left: 0;
    width: 100%;
    fill: none;
    stroke: #f00;
    pointer-events: none;
}

.notes > path {
    marker-end: url(#arrow);
    shape-rendering: crispEdges;
}

.notes marker path {
    stroke: none;
}
```
